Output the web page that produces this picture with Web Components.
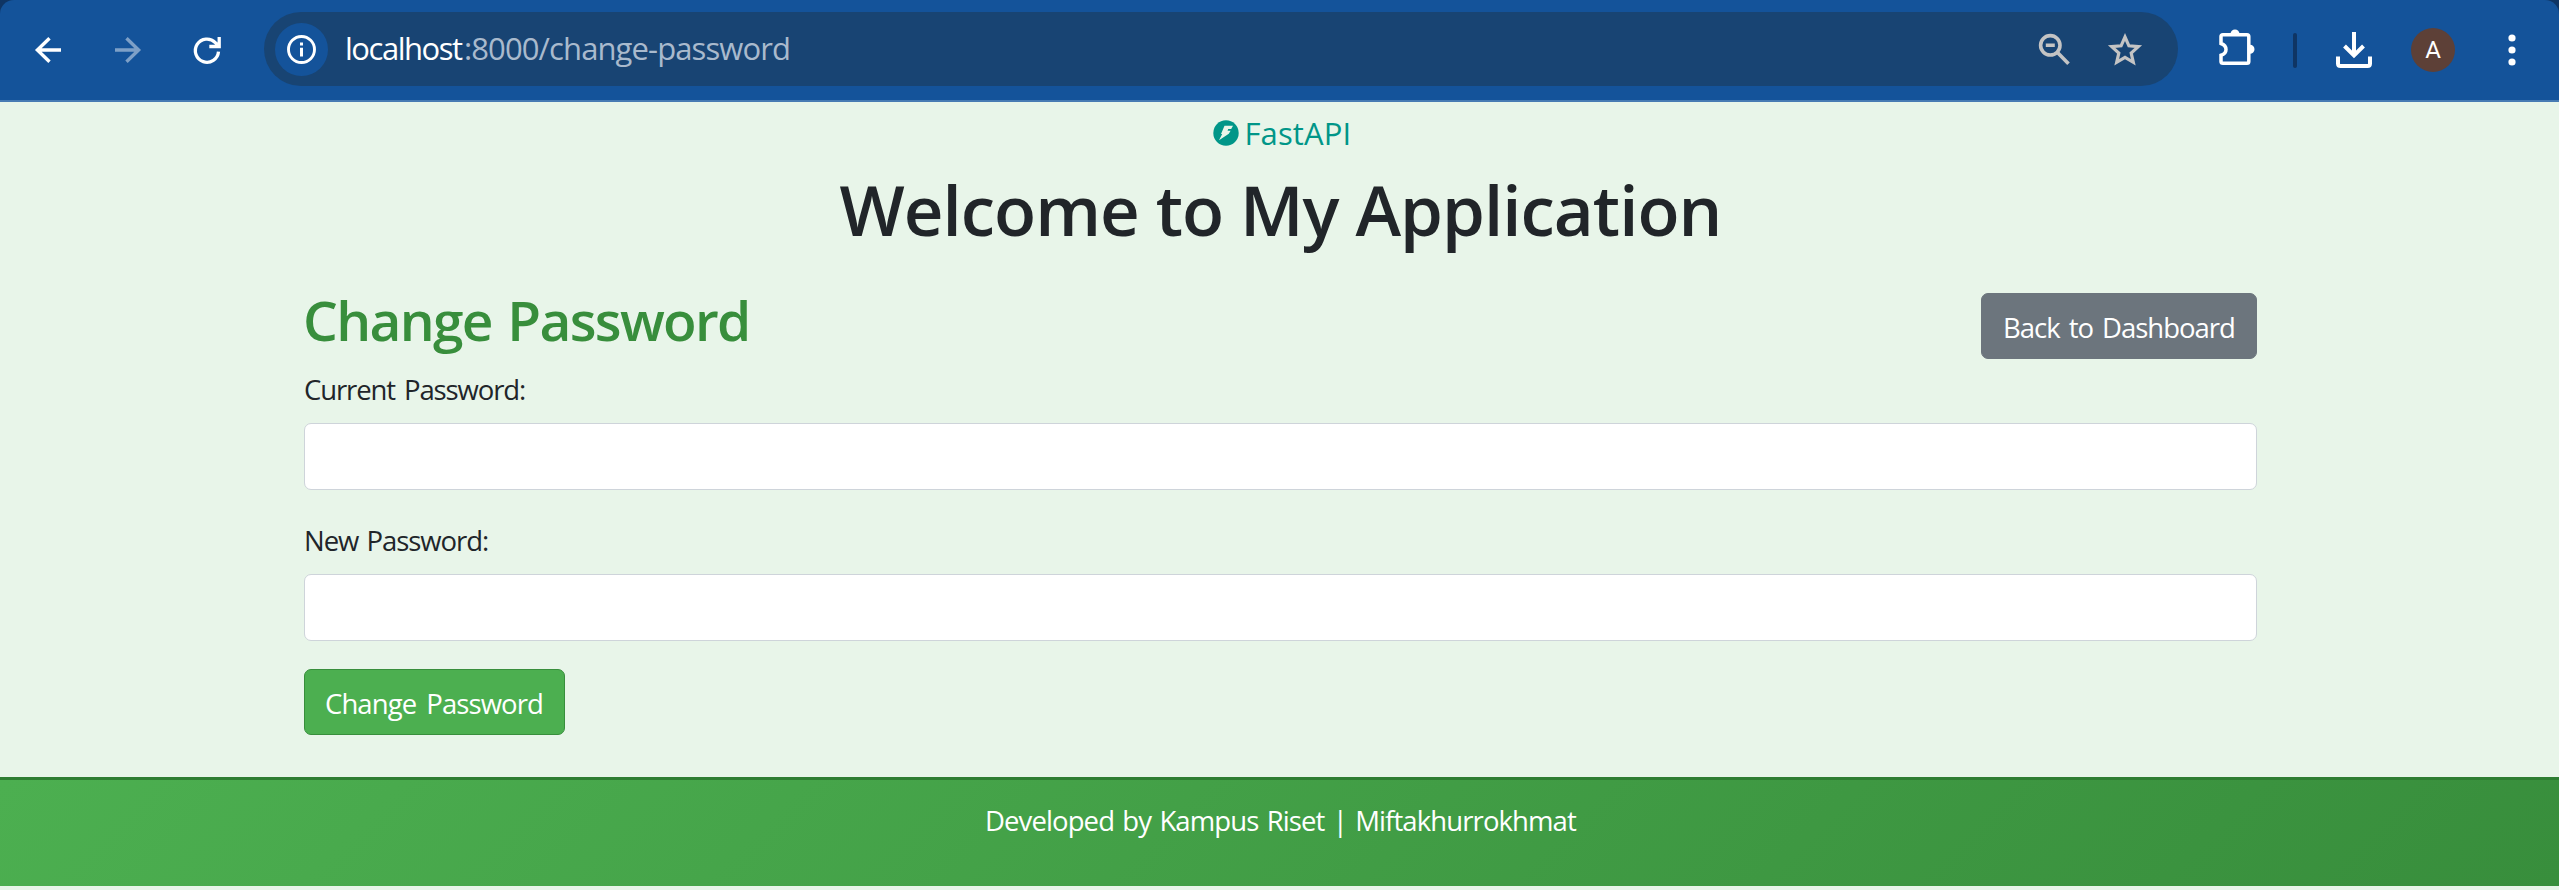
<!DOCTYPE html>
<html lang="en">
<head>
<meta charset="utf-8">
<title>Change Password</title>
<style>
html,body{margin:0;padding:0}
body{background:#e8f5e9;color:#212529;font:370 27.5px/43px "Open Sans","Noto Sans",sans-serif;overflow:hidden;height:890px}
</style>
</head>
<body>
<browser-bar></browser-bar>
<password-page></password-page>
<site-footer></site-footer>
<script>
const define = (name, html, setup) => customElements.define(name, class extends HTMLElement {
  connectedCallback() {
    if (this.shadowRoot) return;
    this.attachShadow({ mode: 'open' }).innerHTML = html;
    if (setup) setup.call(this);
  }
});

// A single line of text whose visible ink spans exactly `w` pixels.
// `gap` widens each space between words by that many pixels.
define('fit-text', `<style>:host{display:block;white-space:pre;flex:none;font-kerning:none}span{display:block}</style><span><slot></slot></span>`, function () {
  const w = +this.getAttribute('w'), gap = +(this.getAttribute('gap') || 0), text = this.textContent, cs = getComputedStyle(this);
  const ctx = document.createElement('canvas').getContext('2d');
  ctx.font = `${cs.fontWeight} ${cs.fontSize} ${cs.fontFamily}`;
  ctx.fontKerning = 'none';
  const m = ctx.measureText(text);
  const ink = m.actualBoundingBoxLeft + m.actualBoundingBoxRight + gap * (text.split(' ').length - 1);
  const span = this.shadowRoot.querySelector('span');
  this.style.width = w + 'px';
  span.style.wordSpacing = gap + 'px';
  span.style.letterSpacing = ((w - ink) / (text.length - 1)) + 'px';
  span.style.marginLeft = m.actualBoundingBoxLeft + 'px';
  span.style.marginRight = '-40px';
});

define('browser-bar', `<style>
:host{display:block;background:#0f3564;height:102px}
.bar{display:flex;align-items:center;height:100px;background:#14539a;border-bottom:2px solid #477bb3;border-radius:14px 14px 0 0;color:#fff}
svg{display:block;flex:none;overflow:visible}
.back{margin-left:35px}.fwd{margin-left:54px;opacity:.45}.reload{margin-left:53px}
.pill{display:flex;align-items:center;box-sizing:border-box;width:1914px;height:74px;border-radius:37px;background:#184473;margin:-2px 0 0 43px;padding-left:11px}
.info{display:flex;align-items:center;justify-content:center;width:53px;height:53px;border-radius:50%;background:#14539a;margin-top:1px}
.url{display:flex;font-size:31px;margin-left:19px;line-height:42px;margin-top:-2px}
.path{color:#a9bacd;margin-left:3px}
.zoom{margin-left:auto}.star{margin:0 36px 0 38px}
.puzzle{margin-left:41px;margin-top:-6px}.sep{width:4px;height:35px;border-radius:2px;background:#0f3564;margin-left:38px}
.dl{margin-left:39px}.avatar{display:flex;align-items:center;justify-content:center;width:44px;height:44px;border-radius:50%;background:#5d4037;margin-left:39px;font:400 24px/44px Roboto,sans-serif}
.dots{margin-left:53px}
</style>
<div class="bar">
<svg class="back" width="26" height="26" fill="none" stroke="#fff" stroke-width="3.4"><path d="M26 13H2M14.5 1.2L2.4 13L14.5 24.8"/></svg>
<svg class="fwd" width="26" height="26" fill="none" stroke="#fff" stroke-width="3.4"><path d="M0 13H24M11.5 1.2L23.6 13L11.5 24.8"/></svg>
<svg class="reload" width="27" height="27" fill="none" stroke="#fff" stroke-width="3.3"><path d="M24.5 14.6A11.6 11.6 0 1 1 21.3 5.6L24.5 8.8M25.2 0V9.5H15.3"/></svg>
<div class="pill">
<div class="info"><svg width="29" height="29" fill="none" stroke="#fff"><circle cx="14.5" cy="14.5" r="13" stroke-width="2.9"/><path d="M14.5 12.8V21.5M14.5 7.4V10.4" stroke-width="3"/></svg></div>
<div class="url"><fit-text w="116">localhost</fit-text><fit-text class="path" w="323">:8000/change-password</fit-text></div>
<svg class="zoom" width="31" height="31" fill="none" stroke="#c4c4c4" stroke-width="3.6"><circle cx="11.3" cy="11.3" r="9.7"/><path d="M18 18L29.5 29.8M6.8 11.3H15.8"/></svg>
<svg class="star" width="34" height="32" fill="none" stroke="#c4c4c4" stroke-width="3.2"><path d="M17 4L20.9 12.8L30.3 13.6L23.2 20L25.3 29.3L17 24.4L8.7 29.3L10.8 20L3.7 13.6L13.1 12.8Z"/></svg>
</div>
<svg class="puzzle" width="36" height="37"><path d="M4 5.7H28Q29.8 5.7 29.8 7.5V32.5Q29.8 34.3 28 34.3H4Q2 34.3 2 32.5V26.3Q7 24.8 7 20.5Q7 16.3 2 14.5V7.5Q2 5.7 4 5.7Z" fill="none" stroke="#fff" stroke-width="3.5"/><path d="M11.5 5a4.5 4.5 0 0 1 9 0ZM31 15.8a4.5 4.5 0 0 1 0 9Z" fill="#fff"/></svg>
<div class="sep"></div>
<svg class="dl" width="36" height="36" fill="none" stroke="#fff" stroke-width="4"><path d="M18 0V23M8.5 14L18 23.5L27.5 14M2 24.5V31.5Q2 34 4.5 34H31.5Q34 34 34 31.5V24.5"/></svg>
<div class="avatar">A</div>
<svg class="dots" width="8" height="32" fill="#fff"><circle cx="4" cy="4" r="3.6"/><circle cx="4" cy="16" r="3.6"/><circle cx="4" cy="28" r="3.6"/></svg>
</div>`);

define('fastapi-logo', `<style>
:host{display:flex;justify-content:center;align-items:center;gap:9px;height:40px;padding-left:2px;color:#009688;font-size:31px;font-weight:430;line-height:40px}
svg{display:block}
</style><svg width="26" height="26"><circle cx="13" cy="13" r="12.7" fill="#009688"/><path d="M11.5 5.7H20L18.2 9H15.2L14.6 10.8H17.6L15.8 13.8L6 20.2L9.2 14H8Z" fill="#e8f5e9"/></svg><fit-text w="101">FastAPI</fit-text>`);

define('app-button', `<style>
:host{display:block;box-sizing:border-box;height:66px;border:1px solid #6c757d;background:#6c757d;border-radius:7px;color:#fff;padding:12px 22px;flex:none}
:host([variant=primary]){background:#4caf50;border-color:#388e3c;padding:12px 22px 12px 21px}
</style><slot></slot>`);

define('password-field', `<style>
:host{display:block}
label{display:block;padding-left:var(--ink,0)}
input{display:block;box-sizing:border-box;width:100%;height:67px;margin:12px 0 0;border:1px solid #ced4da;border-radius:7px;background:#fff;padding:10px 20px;font:inherit;outline:0}
</style><label><slot></slot></label><input type="password">`);

define('password-page', `<style>
:host{display:block;padding-top:11px}
h1,h2{margin:0;font-weight:600}
h1{display:flex;justify-content:center;margin-top:14px;font-size:69px;line-height:84px;padding-right:2px}
main{padding:0 302px 0 304px;margin-top:36px}
header{display:flex;justify-content:space-between;height:72px;margin-bottom:9px}
h2{font-size:55px;line-height:66px;color:#388e3c;padding-left:2px}
header app-button{margin-top:6px;padding:12px 22px 12px 23px}
password-field+password-field{margin-top:29px}
.actions{display:flex;margin-top:28px}
</style>
<fastapi-logo></fastapi-logo>
<h1><fit-text w="878">Welcome to My Application</fit-text></h1>
<main>
<header><h2><fit-text w="441" gap="3">Change Password</fit-text></h2><app-button><fit-text w="229" gap="3">Back to Dashboard</fit-text></app-button></header>
<password-field style="--ink:1px"><fit-text w="220" gap="3">Current Password:</fit-text></password-field>
<password-field style="--ink:2px"><fit-text w="182" gap="2">New Password:</fit-text></password-field>
<div class="actions"><app-button variant="primary"><fit-text w="216" gap="4">Change Password</fit-text></app-button></div>
</main>`);

define('site-footer', `<style>
:host{display:flex;justify-content:center;box-sizing:border-box;height:109px;margin-top:42px;padding:19px 0 0 5px;border-top:3px solid #2e7d32;background:linear-gradient(135deg,#4caf50,#388e3c);color:#fff}
</style><fit-text w="590" gap="2">Developed by Kampus Riset | Miftakhurrokhmat</fit-text>`);
</script>
</body>
</html>
